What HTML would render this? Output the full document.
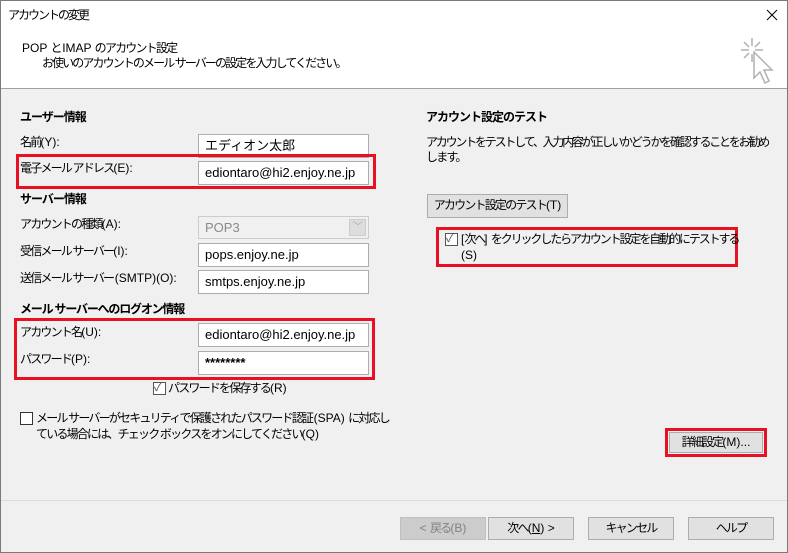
<!DOCTYPE html>
<html><head><meta charset="utf-8"><style>
*{margin:0;padding:0;box-sizing:border-box}
body{width:788px;height:553px;overflow:hidden;background:#f0f0f0;font-family:"Liberation Sans","Noto Sans CJK JP",sans-serif;font-size:12px;color:#000;position:relative;letter-spacing:-1.8px}
i{font-style:normal;letter-spacing:0}
.a{position:absolute;white-space:nowrap;line-height:15px}
.b{font-weight:bold}
.in{position:absolute;background:#fff;border:1px solid #abadb3;padding:3px 0 0 6px;font-size:13px;line-height:16px;left:198px;width:171px;height:24px;letter-spacing:0}
.red{position:absolute;border:3px solid #e81123}
.btn{position:absolute;background:#e1e1e1;border:1px solid #adadad;text-align:center;line-height:21px;font-size:12px;white-space:nowrap}
.cb{position:absolute;width:13px;height:13px;border:1px solid #333;background:#fff}
</style></head><body>
<div style="position:absolute;left:0;top:0;width:788px;height:553px;border:1px solid #7a7a7a;z-index:5;pointer-events:none"></div>
<div style="position:absolute;left:0;top:0;width:788px;height:89px;background:#fff;border-bottom:1px solid #a0a0a0"></div>
<div class="a" style="left:8px;top:8px;letter-spacing:-2px">アカウントの変更</div>
<svg style="position:absolute;left:766px;top:9px" width="12" height="12" viewBox="0 0 12 12" stroke="#000" stroke-width="1"><path d="M1 1l10 10M11 1L1 11"/></svg>
<div class="a" style="left:22px;top:41px"><i>POP </i>と <i>IMAP </i>のアカウント設定</div>
<div class="a" style="left:42px;top:56px;letter-spacing:-1.9px">お使いのアカウントのメール サーバーの設定を入力してください。</div>
<svg style="position:absolute;left:738px;top:36px" width="40" height="50" viewBox="0 0 40 50" fill="none" stroke="#b0b0b0" stroke-width="1.5">
<path d="M14 2v8M14 18v8M3 14h8M17 14h8M6 6l5 5M22 6l-5 5M6 22l5-5"/>
<path d="M16 16v26l6-6 5 11 4-2-5-11 8 0z" fill="#fff"/>
</svg>
<div class="a b" style="left:20px;top:110px;letter-spacing:-1px">ユーザー情報</div>
<div class="a" style="left:20px;top:135px">名前<i>(Y):</i></div>
<div class="in" style="top:134px">エディオン太郎</div>
<div class="red" style="left:16px;top:154px;width:360px;height:35px"></div>
<div class="a" style="left:20px;top:161px">電子メール アドレス<i>(E):</i></div>
<div class="in" style="top:161px">ediontaro@hi2.enjoy.ne.jp</div>
<div class="a b" style="left:20px;top:192px;letter-spacing:-1px">サーバー情報</div>
<div class="a" style="left:20px;top:217px">アカウントの種類<i>(A):</i></div>
<div class="in" style="top:216px;background:#f0f0f0;border-color:#ccc;color:#8a8a8a;height:23px">POP3<div style="position:absolute;right:2px;top:2px;width:17px;height:17px;background:#ddd;border:1px solid #ccc;color:#aaa;font-size:10px;line-height:15px;padding-left:3px">﹀</div></div>
<div class="a" style="left:20px;top:244px">受信メール サーバー<i>(I):</i></div>
<div class="in" style="top:243px">pops.enjoy.ne.jp</div>
<div class="a" style="left:20px;top:271px">送信メール サーバー <i>(SMTP)(O):</i></div>
<div class="in" style="top:270px">smtps.enjoy.ne.jp</div>
<div class="a b" style="left:20px;top:302px;letter-spacing:-1.2px">メール サーバーへのログオン情報</div>
<div class="red" style="left:14px;top:318px;width:361px;height:62px"></div>
<div class="a" style="left:20px;top:325px">アカウント名<i>(U):</i></div>
<div class="in" style="top:323px">ediontaro@hi2.enjoy.ne.jp</div>
<div class="a" style="left:20px;top:352px">パスワード<i>(P):</i></div>
<div class="in" style="top:351px;font-weight:bold">********</div>
<div class="cb" style="left:153px;top:382px;border-color:#555"></div>
<div class="a" style="left:154px;top:380px;color:#555;letter-spacing:0">✓</div>
<div class="a" style="left:168px;top:381px">パスワードを保存する<i>(R)</i></div>
<div class="cb" style="left:20px;top:412px"></div>
<div class="a" style="left:36px;top:411px">メール サーバーがセキュリティで保護されたパスワード認証 <i>(SPA) </i>に対応し</div>
<div class="a" style="left:36px;top:427px">ている場合には、チェック ボックスをオンにしてください<i>(Q)</i></div>

<div class="a b" style="left:426px;top:110px;letter-spacing:-1px">アカウント設定のテスト</div>
<div class="a" style="left:426px;top:135px;letter-spacing:-2.2px">アカウントをテストして、入力内容が正しいかどうかを確認することをお勧め</div>
<div class="a" style="left:426px;top:150px">します。</div>
<div class="btn" style="left:427px;top:194px;width:141px;height:24px">アカウント設定のテスト<i>(T)</i></div>
<div class="red" style="left:436px;top:227px;width:302px;height:40px"></div>
<div class="cb" style="left:445px;top:233px;border-color:#555"></div>
<div class="a" style="left:446px;top:231px;color:#555;letter-spacing:0">✓</div>
<div class="a" style="left:461px;top:232px;letter-spacing:-2.1px"><i>[</i>次へ<i>] </i>をクリックしたらアカウント設定を自動的にテストする</div>
<div class="a" style="left:461px;top:248px"><i>(S)</i></div>
<div class="red" style="left:665px;top:428px;width:102px;height:29px"></div>
<div class="btn" style="left:669px;top:432px;width:94px;height:21px;line-height:19px">詳細設定<i>(M)...</i></div>

<div style="position:absolute;left:0;top:500px;width:788px;border-top:1px solid #dcdcdc"></div>
<div class="btn" style="left:400px;top:517px;width:86px;height:23px;background:#ccc;border-color:#bfbfbf;color:#838383"><i>&lt; </i>戻る<i>(B)</i></div>
<div class="btn" style="left:488px;top:517px;width:86px;height:23px">次へ<i>(<u>N</u>) &gt;</i></div>
<div class="btn" style="left:588px;top:517px;width:86px;height:23px">キャンセル</div>
<div class="btn" style="left:688px;top:517px;width:86px;height:23px">ヘルプ</div>
</body></html>
